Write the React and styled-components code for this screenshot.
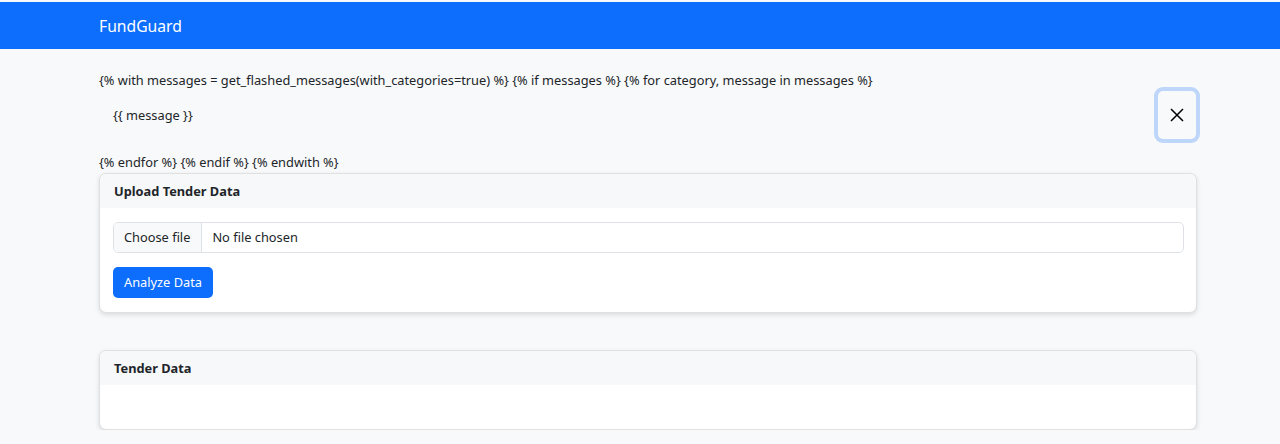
import React from "react";
import styled, { createGlobalStyle } from "styled-components";

const GlobalStyle = createGlobalStyle`
  html, body {
    margin: 0;
    padding: 0;
    background: #f8f9fa;
  }
  body {
    padding-top: 2px;
    font-family: "Noto Sans", "Liberation Sans", sans-serif;
    font-size: 12.8px;
    line-height: 21px;
    color: #212529;
  }
  * {
    box-sizing: border-box;
  }
`;

const Navbar = styled.nav`
  height: 47px;
  background: #0d6efd;
  display: flex;
  align-items: center;
`;

const Brand = styled.div`
  margin-left: 99px;
  color: #fff;
  font-size: 15.7px;
  line-height: 24px;
`;

const Container = styled.main`
  margin: 21px 0 0 99px;
  width: 1099px;
`;

const Line = styled.div`
  height: 21px;
`;

const Alert = styled.div`
  position: relative;
  padding: 14px 48px 14px 14px;
  margin-bottom: 12px;
  border-radius: 5px;
`;

const CloseButton = styled.button`
  position: absolute;
  top: 0;
  right: 2px;
  width: 38px;
  height: 48px;
  padding: 0;
  border: 0;
  border-radius: 5px;
  background: transparent;
  box-shadow: 0 0 0 4px rgba(13, 110, 253, 0.25);
  display: flex;
  align-items: center;
  justify-content: center;
  color: #000;
`;

const Card = styled.section`
  background: #fff;
  border: 1px solid rgba(0, 0, 0, 0.12);
  border-radius: 7px;
  box-shadow: 0 2px 5px rgba(0, 0, 0, 0.12);
  overflow: hidden;
  width: 1098px;
  margin-bottom: ${(p) => p.gap || 0}px;
`;

const CardHeader = styled.div`
  background: #f7f8f9;
  padding: 6px 14px;
  height: 34px;
  display: flex;
  align-items: center;
  font-weight: 700;
`;

const CardBody = styled.div`
  padding: 14px 13px;
  min-height: ${(p) => p.min || 0}px;
`;

const FileField = styled.label`
  display: flex;
  height: 31px;
  width: 1071px;
  border: 1px solid #dee2e6;
  border-radius: 5px;
  overflow: hidden;
  margin-bottom: 14px;
  cursor: pointer;

  input {
    display: none;
  }
`;

const FileButton = styled.span`
  background: #f8f9fa;
  border-right: 1px solid #dee2e6;
  padding: 0 11px 0 10px;
  display: flex;
  align-items: center;
  color: #212529;
`;

const FileName = styled.span`
  padding: 0 10px;
  display: flex;
  align-items: center;
`;

const PrimaryButton = styled.button`
  background: #0d6efd;
  color: #fff;
  border: 0;
  border-radius: 5px;
  height: 31px;
  padding: 0 11px;
  font: inherit;
`;

const CloseIcon = () => (
  <svg width="14" height="14" viewBox="0 0 14 14">
    <path d="M1 1L13 13M13 1L1 13" stroke="#000" strokeWidth="1.5" />
  </svg>
);

export default function App() {
  return (
    <>
      <GlobalStyle />
      <Navbar>
        <Brand>FundGuard</Brand>
      </Navbar>
      <Container>
        <Line>
          {"{% with messages = get_flashed_messages(with_categories=true) %} {% if messages %} {% for category, message in messages %}"}
        </Line>
        <Alert>
          {"{{ message }}"}
          <CloseButton aria-label="Close">
            <CloseIcon />
          </CloseButton>
        </Alert>
        <Line>{"{% endfor %} {% endif %} {% endwith %}"}</Line>
        <Card gap={37}>
          <CardHeader>Upload Tender Data</CardHeader>
          <CardBody>
            <FileField>
              <input type="file" />
              <FileButton>Choose file</FileButton>
              <FileName>No file chosen</FileName>
            </FileField>
            <PrimaryButton>Analyze Data</PrimaryButton>
          </CardBody>
        </Card>
        <Card>
          <CardHeader>Tender Data</CardHeader>
          <CardBody min={44} />
        </Card>
      </Container>
    </>
  );
}
